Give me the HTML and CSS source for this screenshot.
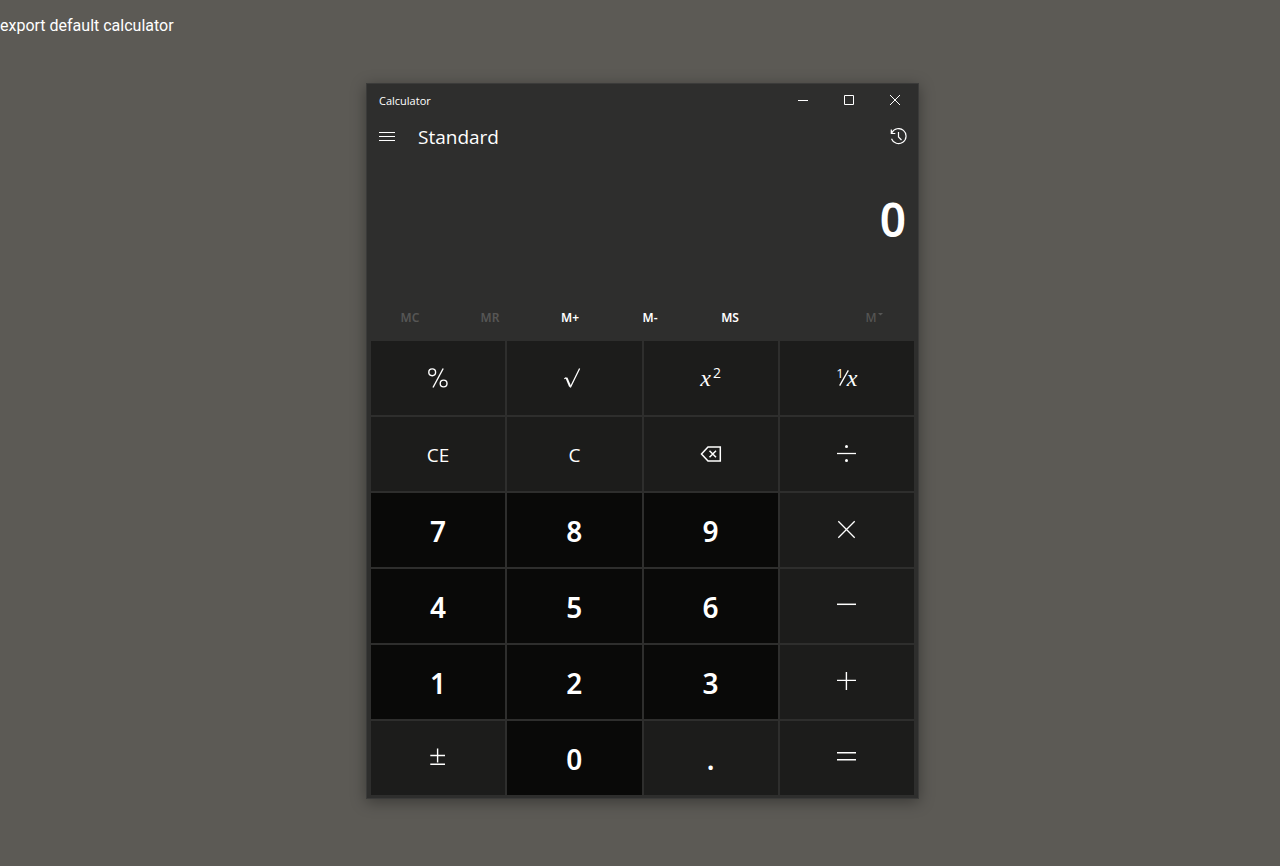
FILE: index.html
```html
<!DOCTYPE html>
<html lang="en">
<head>
<meta charset="utf-8">
<meta name="viewport" content="width=device-width, initial-scale=1">
<title>Calculator</title>
<link rel="stylesheet" href="styles.css">
</head>
<body>
<p class="note">export default calculator</p>
<main class="stage">
  <section class="window" aria-label="Calculator">
    <header class="titlebar">
      <h1 class="title">Calculator</h1>
      <div class="window-controls">
        <button class="control" type="button" aria-label="Minimize"><svg class="icon" width="10" height="10" viewBox="0 0 10 10"><path d="M0 5.5h10"/></svg></button>
        <button class="control" type="button" aria-label="Maximize"><svg class="icon" width="10" height="10" viewBox="0 0 10 10"><path d="M.5.5h9v9h-9z"/></svg></button>
        <button class="control" type="button" aria-label="Close"><svg class="icon" width="10" height="10" viewBox="0 0 10 10"><path d="M0 0l10 10M10 0L0 10"/></svg></button>
      </div>
    </header>
    <nav class="mode">
      <button class="mode-button" type="button" aria-label="Open navigation"><svg class="icon" width="16" height="10" viewBox="0 0 16 10"><path d="M0 .5h16M0 4.5h16M0 8.5h16"/></svg></button>
      <h2 class="mode-name">Standard</h2>
      <button class="mode-button" type="button" aria-label="History"><svg class="icon" width="18" height="18" viewBox="0 0 18 18"><path stroke-width="1.2" d="M2.5 10.7A7.5 7.5 0 1 0 2.8 4.8M2.3 1.5v4h4M9.5 4v5l3 3"/></svg></button>
    </nav>
    <output class="display">0</output>
    <div class="memory">
      <button class="memory-key" type="button" disabled>MC</button>
      <button class="memory-key" type="button" disabled>MR</button>
      <button class="memory-key" type="button">M+</button>
      <button class="memory-key" type="button">M-</button>
      <button class="memory-key" type="button">MS</button>
      <button class="memory-key memory-list" type="button" disabled aria-label="Memory list">M<svg class="caret" width="5" height="9" viewBox="0 0 5 9"><path d="M0 0h5L2.5 2.5z"/></svg></button>
    </div>
    <div class="keys">
      <button class="key" type="button" aria-label="Percent"><svg class="icon" width="20" height="20" viewBox="0 0 20 20"><g stroke-width="1.4"><circle cx="4.2" cy="4.3" r="3.4"/><circle cx="15.6" cy="15.5" r="3.4"/><path d="M15.2.5L5 19.5"/></g></svg></button>
      <button class="key" type="button" aria-label="Square root"><svg class="icon" width="20" height="20" viewBox="0 0 20 20"><path stroke-width="1.3" d="M.3 10.8l2.2-1.2M6.3 19.5L15.6.5"/><path stroke-width="2" d="M2.5 9.8l3.6 8.7"/></svg></button>
      <button class="key formula" type="button"><i>x</i><sup class="power">2</sup></button>
      <button class="key formula" type="button" aria-label="Reciprocal"><sup class="numerator">1</sup><svg class="icon slash" width="10" height="16" viewBox="0 0 10 16"><path stroke-width="1.3" d="M.7 15.6L9.3.4"/></svg><i>x</i></button>
      <button class="key label" type="button">CE</button>
      <button class="key label" type="button">C</button>
      <button class="key" type="button" aria-label="Backspace"><svg class="icon" width="22" height="16" viewBox="0 0 22 16"><path stroke-width="1.5" d="M8 1h12.3v14H8L1.5 8zM9.5 4.8l6.5 6.5M16 4.8l-6.5 6.5"/></svg></button>
      <button class="key" type="button" aria-label="Divide"><svg class="icon" width="20" height="20" viewBox="0 0 20 20"><path d="M0 9.5h19" stroke-width="1.3"/><g class="dots"><circle cx="9.5" cy="2.5" r="1.5"/><circle cx="9.5" cy="16.5" r="1.5"/></g></svg></button>
      <button class="key digit" type="button">7</button>
      <button class="key digit" type="button">8</button>
      <button class="key digit" type="button">9</button>
      <button class="key" type="button" aria-label="Multiply"><svg class="icon" width="20" height="20" viewBox="0 0 20 20"><path stroke-width="1.3" d="M1.3 1.3l16.4 16.4M17.7 1.3L1.3 17.7"/></svg></button>
      <button class="key digit" type="button">4</button>
      <button class="key digit" type="button">5</button>
      <button class="key digit" type="button">6</button>
      <button class="key" type="button" aria-label="Subtract"><svg class="icon" width="20" height="20" viewBox="0 0 20 20"><path stroke-width="1.5" d="M0 8.3h19"/></svg></button>
      <button class="key digit" type="button">1</button>
      <button class="key digit" type="button">2</button>
      <button class="key digit" type="button">3</button>
      <button class="key" type="button" aria-label="Add"><svg class="icon" width="20" height="20" viewBox="0 0 20 20"><path stroke-width="1.4" d="M0 8.4h19M9.4 0v18"/></svg></button>
      <button class="key" type="button" aria-label="Negate"><svg class="icon" width="20" height="20" viewBox="0 0 20 20"><path stroke-width="1.4" d="M2.3 7.5h14.7M2.3 16.3h14.7M9.6.5v14"/></svg></button>
      <button class="key digit" type="button">0</button>
      <button class="key point" type="button">.</button>
      <button class="key" type="button" aria-label="Equals"><svg class="icon" width="20" height="20" viewBox="0 0 20 20"><path stroke-width="1.5" d="M0 4.8h19M0 11.8h19"/></svg></button>
    </div>
  </section>
</main>
</body>
</html>
```
FILE: styles.css
```css
* {
  box-sizing: border-box;
}

body {
  margin: 0;
  min-height: 100vh;
  background: #5c5a55;
  color: #fff;
  font-family: "Noto Sans", "Open Sans", sans-serif;
}

.note {
  margin: 16px 0;
  font: 16px/19px Roboto, sans-serif;
}

.stage {
  display: flex;
  justify-content: center;
  padding: 32px 0 32px 5px;
}

.window {
  width: 100%;
  max-width: 553px;
  border: 1px solid #3b3b3a;
  background: #2e2e2d;
  box-shadow: 0 3px 14px rgba(0, 0, 0, 0.36);
}

button {
  display: flex;
  align-items: center;
  justify-content: center;
  padding: 0;
  border: 0;
  background: transparent;
  color: inherit;
  font: inherit;
}

.icon {
  fill: none;
  stroke: #fff;
  stroke-width: 1;
}

.dots {
  fill: #fff;
  stroke: none;
}

.titlebar {
  display: flex;
  justify-content: space-between;
  height: 32px;
  padding-left: 12px;
}

.title {
  margin: 0;
  font: 400 11px/34px "Open Sans", sans-serif;
}

.window-controls {
  display: flex;
}

.control {
  width: 46px;
}

.mode {
  display: flex;
  align-items: center;
  height: 41px;
}

.mode-button {
  width: 40px;
  height: 40px;
}

.mode-name {
  flex: 1;
  margin: 0;
  padding-left: 11px;
  font: 400 19px/40px "Open Sans", sans-serif;
}

.display {
  display: block;
  padding: 31px 12px 43px;
  font-size: 46px;
  font-weight: 600;
  line-height: 63px;
  text-align: right;
}

.memory {
  display: grid;
  grid-template-columns: repeat(5, minmax(0, 80px)) minmax(80px, 1fr);
  height: 47px;
  padding: 0 4px 0 3px;
}

.memory-key {
  font-size: 12px;
  font-weight: 600;
}

.memory-key:disabled {
  color: #565655;
}

.memory-list {
  justify-self: end;
  width: 80px;
  font-weight: 500;
}

.caret {
  margin-left: 1px;
  fill: currentColor;
}

.keys {
  display: grid;
  grid-template-columns: repeat(4, 1fr);
  grid-auto-rows: minmax(74px, auto);
  gap: 2px;
  padding: 0 4px 3px;
}

.key {
  background: #1c1c1b;
}

.label {
  padding-top: 2px;
  font: 400 19px/28px "Open Sans", sans-serif;
}

.digit,
.point {
  padding-top: 2px;
  font: 600 28px/38px "Noto Sans", sans-serif;
}

.digit {
  background: #090908;
}

.formula {
  font: 24px/28px "Liberation Serif", serif;
}

.power,
.numerator {
  align-self: center;
  padding-bottom: 10px;
  font: 14px/16px "Open Sans", sans-serif;
}

.power {
  padding-left: 2px;
}

.numerator {
  font-size: 13px;
}

.slash {
  margin: 0 -2px 0 -5px;
}
```
